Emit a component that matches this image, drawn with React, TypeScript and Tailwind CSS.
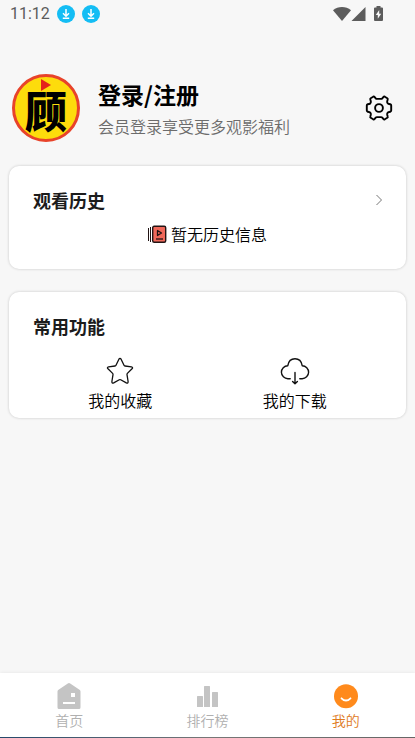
import React, { useState } from 'react';

const DownloadBadge = () => (
  <svg viewBox="0 0 18 18" className="h-[18px] w-[18px]" aria-hidden="true">
    <circle cx="9" cy="9" r="9" fill="#14bdf4" />
    <path d="M9 4v7M6 8.300l3 3 3-3M5.800 13.300h6.400" fill="none" stroke="#fff" strokeWidth="1.500" />
  </svg>
);

const StatusBar = () => (
  <div className="flex h-7 items-center pl-[10px] pr-[31px] text-[#5c5c5c]">
    <span className="font-['Roboto',sans-serif] text-base font-normal leading-7">11:12</span>
    <div className="ml-[7px] flex gap-[7px]">
      <DownloadBadge />
      <DownloadBadge />
    </div>
    <svg viewBox="0 0 51 16" className="ml-auto h-4 w-[51px]" fill="#5c5c5c" aria-hidden="true">
      <path d="M0 4.200C5 -.2 13 -.2 18 4.200L9 15z" />
      <path d="M32.500 1v14H18.500z" />
      <path d="M43.500 0h4v1.500h1.500q1 0 1 1V14q0 1-1 1h-7q-1 0-1-1V2.500q0-1 1-1h1.500z" />
      <path d="M46.200 4l-3.400 5h2v3.800l3.400-5h-2z" fill="#f7f7f7" />
    </svg>
  </div>
);

const Avatar = () => (
  <div className="relative flex h-[68px] w-[68px] shrink-0 items-center justify-center rounded-full border-[3px] border-[#e8432a] bg-[#fddc0c]">
    <svg viewBox="0 0 10 12" className="absolute left-[26px] top-[2px] h-3 w-[10px]" aria-hidden="true">
      <path d="M0 0l10 6-10 6z" fill="#e5231b" />
    </svg>
    <span className="pt-1 text-[42px] font-black leading-[48px] text-black">顾</span>
  </div>
);

const GearIcon = () => (
  <svg viewBox="0 0 28 28" className="h-7 w-7" fill="none" stroke="#000" strokeWidth="1.900" strokeLinejoin="round" aria-hidden="true">
    <path d="M8.200 2.700Q9 2.300 9.700 3.100L10.700 4.300Q11.200 4.900 12 4.900H16Q16.800 4.900 17.300 4.300L18.300 3.100Q19 2.300 19.800 2.700L22.300 4.200Q23 4.600 22.700 5.500L22.200 7.200Q22 8 22.400 8.700L22.700 9.200Q23.100 9.900 23.900 10L25.300 10.300Q26.200 10.500 26.200 11.400V16.600Q26.200 17.500 25.300 17.700L23.900 18Q23.100 18.100 22.700 18.800L22.400 19.300Q22 20 22.200 20.800L22.700 22.500Q23 23.400 22.300 23.800L19.800 25.300Q19 25.700 18.300 24.900L17.300 23.700Q16.800 23.100 16 23.100H12Q11.200 23.100 10.700 23.700L9.700 24.900Q9 25.700 8.200 25.300L5.700 23.800Q5 23.400 5.300 22.500L5.800 20.800Q6 20 5.600 19.300L5.300 18.800Q4.900 18.100 4.100 18L2.700 17.700Q1.800 17.500 1.800 16.600V11.400Q1.800 10.500 2.700 10.300L4.100 10Q4.900 9.900 5.300 9.200L5.600 8.700Q6 8 5.800 7.200L5.300 5.500Q5 4.600 5.700 4.200z" />
    <circle cx="14" cy="14" r="3.900" />
  </svg>
);

const HistoryIcon = () => (
  <svg viewBox="0 0 19 19" className="h-[19px] w-[19px]" fill="none" stroke="#221414" aria-hidden="true">
    <path d="M.5 3v13M2.500 2v15" strokeWidth="1" />
    <rect x="4.700" y="1.200" width="13" height="16" rx="1.500" fill="#f0685a" strokeWidth="1.400" />
    <path d="M9.500 5.500v5l4-2.500z" strokeWidth="1.300" strokeLinejoin="round" />
    <path d="M8 14h7" strokeWidth="1.300" />
  </svg>
);

const StarIcon = () => (
  <svg viewBox="0 0 28 28" className="h-7 w-7" fill="none" stroke="#111" strokeWidth="1.300" strokeLinejoin="round" aria-hidden="true">
    <path d="M12.900 2.200Q14 .4 15.100 2.200L18 8.300Q18.300 8.900 19 9L25.400 9.900Q27.400 10.300 26 11.800L21.400 16.400Q20.900 16.900 21 17.600L22.100 24.500Q22.200 26.600 20.300 25.900L14.700 22.800Q14 22.400 13.300 22.800L7.700 25.900Q5.800 26.600 5.900 24.500L7 17.600Q7.100 16.900 6.600 16.400L2 11.800Q.6 10.300 2.600 9.900L9 9Q9.700 8.900 10 8.300z" />
  </svg>
);

const CloudIcon = () => (
  <svg viewBox="0 0 30 28" className="h-7 w-[30px]" fill="none" stroke="#111" strokeWidth="1.400" strokeLinecap="round" strokeLinejoin="round" aria-hidden="true">
    <path d="M10.200 21.700H8A6.500 6.500 0 0 1 7.800 8.700C8.500 4.500 11.300 1.800 15 1.800S21.500 4.500 22.200 8.700A6.500 6.500 0 0 1 22 21.700H19.800" />
    <path d="M15 15.500V26.500M12.600 24.400L15 26.800l2.400-2.400" />
  </svg>
);

const HomeIcon = () => (
  <svg viewBox="0 0 24 28" className="h-7 w-6" aria-hidden="true">
    <path d="M10.800 1.500q1.200-.9 2.400 0l9.300 6.300q1 .7 1 1.800V25.500q0 1.500-1.500 1.500H2q-1.500 0-1.500-1.500V9.600q0-1.100 1-1.800z" fill="#c4c4c4" />
    <path d="M14 11h4v4h-4zM6 20h12v2H6z" fill="#fff" />
  </svg>
);

const RankIcon = () => (
  <svg viewBox="0 0 24 28" className="h-7 w-6" fill="#c4c4c4" aria-hidden="true">
    <rect x="2" y="14" width="6" height="11" rx=".5" />
    <rect x="9" y="4" width="6" height="21" rx=".5" />
    <rect x="17" y="10" width="6" height="15" rx=".5" />
  </svg>
);

const SmileIcon = () => (
  <svg viewBox="0 0 24 28" className="h-7 w-6" aria-hidden="true">
    <circle cx="12" cy="14.300" r="12" fill="#ff8a1c" />
    <path d="M7.500 16.300q4.500 4.500 9 0" fill="none" stroke="#fff" strokeWidth="1.800" strokeLinecap="round" />
  </svg>
);

const features = [
  { title: '我的收藏', icon: <StarIcon /> },
  { title: '我的下载', icon: <CloudIcon /> },
];

const tabs = [
  { id: 'home', title: '首页', icon: <HomeIcon /> },
  { id: 'rank', title: '排行榜', icon: <RankIcon /> },
  { id: 'mine', title: '我的', icon: <SmileIcon /> },
];

const Card = ({ children }: { children: React.ReactNode }) => (
  <section className="rounded-[10px] bg-white px-6 pt-[22px] shadow-[0_0_3px_rgba(0,0,0,0.2)]">{children}</section>
);

export default function App() {
  const [active, setActive] = useState('mine');
  return (
    <div className="flex min-h-screen flex-col bg-[#f7f7f7] font-['Noto_Sans_CJK_SC',sans-serif] font-[350] text-black">
      <StatusBar />
      <header className="flex items-center pl-3 pr-[22px] pt-[46px]">
        <Avatar />
        <div className="ml-[18px] flex-1 pt-1">
          <h1 className="text-[23px] font-bold leading-8">登录/注册</h1>
          <p className="text-base leading-8 text-[#6c6c6c]">会员登录享受更多观影福利</p>
        </div>
        <button aria-label="设置"><GearIcon /></button>
      </header>

      <main className="flex flex-col gap-[23px] px-[9px] pt-6">
        <Card>
          <div className="flex items-center justify-between">
            <h2 className="text-lg font-bold leading-6 text-[#1c1c1c]">观看历史</h2>
            <button aria-label="观看历史">
              <svg viewBox="0 0 8 12" className="h-3 w-2" fill="none" stroke="#777" aria-hidden="true">
                <path d="M2.500 1L7.500 6l-5 5" />
              </svg>
            </button>
          </div>
          <div className="flex items-center justify-center gap-1 pb-[23px] pt-[10px]">
            <HistoryIcon />
            <p className="text-base leading-6 text-black">暂无历史信息</p>
          </div>
        </Card>

        <Card>
          <h2 className="text-lg font-bold leading-6 text-[#1c1c1c]">常用功能</h2>
          <div className="grid grid-cols-2 pb-[6px] pt-[19px]">
            {features.map((f) => (
              <button key={f.title} className="flex flex-col items-center gap-[3px]">
                {f.icon}
                <span className="text-base leading-6">{f.title}</span>
              </button>
            ))}
          </div>
        </Card>
      </main>

      <nav className="mt-auto bg-white shadow-[0_0_4px_rgba(0,0,0,0.08)]">
        <div className="grid grid-cols-3 pb-[7px] pt-[9px]">
          {tabs.map((t) => (
            <button
              key={t.id}
              onClick={() => setActive(t.id)}
              className={`flex flex-col items-center text-sm leading-5 ${active === t.id ? 'text-[#e07a1c]' : 'text-[#b0b0b0]'}`}
            >
              {t.icon}
              <span>{t.title}</span>
            </button>
          ))}
        </div>
        <div className="h-px bg-linear-to-r from-[#24496b] via-[#777] to-[#666]" />
      </nav>
    </div>
  );
}
